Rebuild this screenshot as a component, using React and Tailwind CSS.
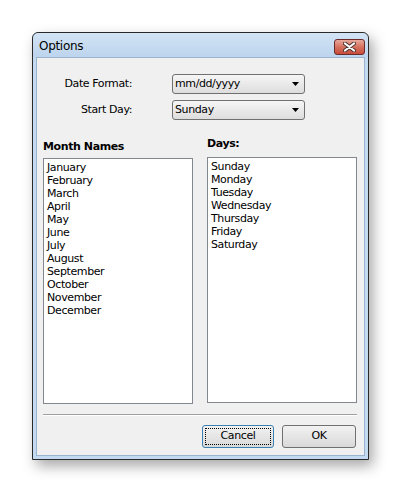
export default function App() {
  const months = ["January","February","March","April","May","June","July","August","September","October","November","December"];
  const days = ["Sunday","Monday","Tuesday","Wednesday","Thursday","Friday","Saturday"];
  const font = { fontFamily: '"DejaVu Sans", Tahoma, sans-serif' };
  const Arrow = () => (
    <svg width="7" height="4" viewBox="0 0 7 4" className="ml-auto"><path d="M0 0H7L3.5 4Z" fill="#000" /></svg>
  );
  return (
    <div className="w-[401px] h-[491px] bg-white pl-[32px] pt-[32px] text-[11px] text-black tracking-[-0.4px]" style={font}>
      <div className="w-[337px] h-[428px] border border-[#2a2a2a] rounded-t-[6px] bg-[#c4daf0] flex flex-col shadow-[4px_6px_14px_rgba(0,0,0,0.35)]">
        <div className="h-[24px] flex items-center pl-[6px] pr-[3px] rounded-t-[6px] bg-gradient-to-b from-[#d3e4f5] to-[#bcd4ed]">
          <span className="text-[12px] text-black tracking-[-0.3px] mt-[1px]">Options</span>
          <div className="ml-auto mt-[4px] w-[31px] h-[16px] rounded-[3px] border border-[#6b2b2b] bg-gradient-to-b from-[#e8a89c] via-[#d5715f] to-[#c74a3a] flex items-center justify-center">
            <svg width="13" height="10" viewBox="0 0 13 10">
              <path d="M2 1.5L11 8.5M11 1.5L2 8.5" stroke="#4a3030" strokeWidth="4" strokeLinecap="round" />
              <path d="M2 1.5L11 8.5M11 1.5L2 8.5" stroke="#fff" strokeWidth="2.2" strokeLinecap="round" />
            </svg>
          </div>
        </div>
        <div className="flex-1 mx-[3px] mb-[3px] border border-[#9ab4cf] bg-[#f0f0f0] flex flex-col">
          <div className="mt-[16px] flex items-center">
            <span className="w-[95px] text-right">Date Format:</span>
            <div className="ml-[40px] w-[133px] h-[20px] rounded-[3px] border border-[#707070] bg-gradient-to-b from-[#f6f6f6] to-[#dddddd] flex items-center pl-[2px] pr-[5px]">
              <span>mm/dd/yyyy</span><Arrow />
            </div>
          </div>
          <div className="mt-[6px] flex items-center">
            <span className="w-[95px] text-right">Start Day:</span>
            <div className="ml-[40px] w-[133px] h-[20px] rounded-[3px] border border-[#707070] bg-gradient-to-b from-[#f6f6f6] to-[#dddddd] flex items-center pl-[2px] pr-[5px]">
              <span>Sunday</span><Arrow />
            </div>
          </div>
          <div className="flex mt-[15px] ml-[6px]">
            <div className="flex flex-col">
              <div className="h-[23px] pt-[4px] font-bold">Month Names</div>
              <div className="w-[150px] h-[246px] border border-[#828790] bg-white pl-[3px] pt-[2px] leading-[13px]">
                {months.map((m) => <div key={m}>{m}</div>)}
              </div>
            </div>
            <div className="flex flex-col ml-[14px]">
              <div className="h-[22px] pt-[1px] font-bold">Days:</div>
              <div className="w-[150px] h-[246px] border border-[#828790] bg-white pl-[3px] pt-[2px] leading-[13px]">
                {days.map((d) => <div key={d}>{d}</div>)}
              </div>
            </div>
          </div>
          <div className="mt-[10px] ml-[6px] w-[314px] h-[2px] border-t border-[#a0a0a0] border-b-white border-b" />
          <div className="flex mt-[9px] ml-[165px]">
            <div className="w-[72px] h-[23px] rounded-[3px] border border-[#3c7fb1] bg-gradient-to-b from-[#f2f2f2] to-[#d9d9d9] p-[2px]">
              <div className="w-full h-full border border-dotted border-black flex items-center justify-center">Cancel</div>
            </div>
            <div className="ml-[8px] w-[74px] h-[23px] rounded-[3px] border border-[#707070] bg-gradient-to-b from-[#f2f2f2] to-[#d9d9d9] flex items-center justify-center">OK</div>
          </div>
        </div>
      </div>
    </div>
  );
}
